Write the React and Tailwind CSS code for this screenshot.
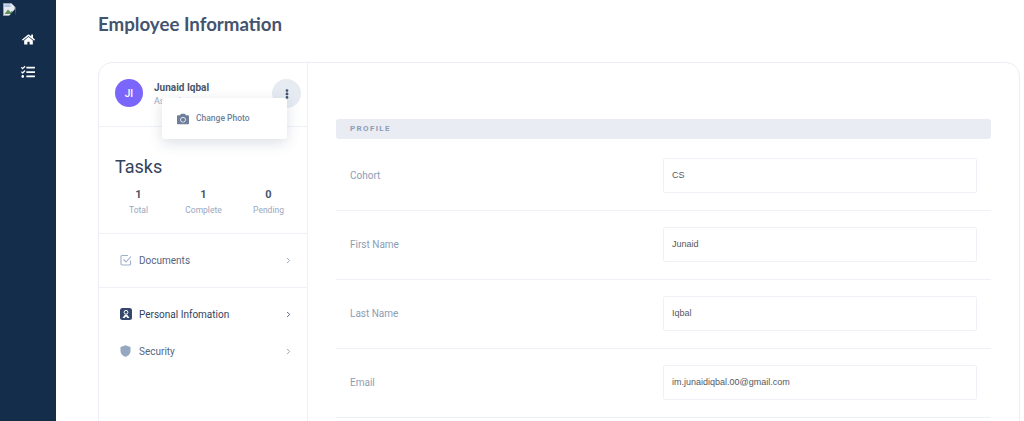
import React from "react";
import { ChevronRight } from "lucide-react";
import { FaHome, FaTasks, FaCamera, FaEllipsisV } from "react-icons/fa";

function Row({ label, value }) {
  return (
    <div className="flex h-[69px] items-start border-b border-[#eff1f6] pt-[16px]">
      <div className="flex h-[35px] w-[327px] items-center pl-[14px] text-[10px] text-[#8c9db5]">{label}</div>
      <div className="flex h-[35px] w-[314px] items-center rounded-[2px] border border-[#eff1f6] px-2 text-[9px] text-[#55585f] font-['Liberation_Sans',sans-serif]">{value}</div>
    </div>
  );
}

function NavItem({ icon, label, active, className }) {
  return (
    <div className={`flex items-center pr-[14px] pl-[21px] text-[10px] ${active ? "text-[#33425c]" : "text-[#55657f]"} ${className}`}>
      <span className="flex w-[19px] items-center">{icon}</span>
      <span className="flex-1">{label}</span>
      <ChevronRight size={9} strokeWidth={2.5} className={active ? "text-[#4b5a75]" : "text-[#8fa0b8]"} />
    </div>
  );
}

function Stat({ n, label }) {
  return (
    <div className="flex w-[65px] flex-col items-center">
      <div className="mt-[1px] text-[11px] leading-[14px] font-bold text-[#4a5568]">{n}</div>
      <div className="mt-[2px] text-[8.5px] leading-[12px] text-[#9aa8bd]">{label}</div>
    </div>
  );
}

export default function App() {
  return (
    <div className="flex h-[421px] w-[1024px] overflow-hidden bg-white font-['Roboto',sans-serif]">
      <aside className="flex w-[56px] shrink-0 flex-col items-center bg-[#132d4b]">
        <svg width="13" height="13" viewBox="0 0 13 13" className="mt-[3px] mr-[38px] shrink-0">
          <path d="M0.500 0.500H8.500L12 4V12.500H0.500Z" fill="#e6e9ee" stroke="#9aa3ad" />
          <path d="M1.500 11L5 6.500L7.500 9L9 8L11.500 11Z" fill="#5f8f5a" />
          <path d="M1.500 1.500H7.500V4H1.500Z" fill="#a9c3ea" />
          <path d="M12 6L6 13H13Z" fill="#132d4b" />
        </svg>
        <FaHome className="mt-[17px] text-[13px] text-white" />
        <FaTasks className="mt-[19px] text-[14px] text-white" />
      </aside>
      <main className="flex-1 pr-[5px] pl-[42px]">
        <h1 className="mt-[12px] h-[24px] font-['Lato',sans-serif] text-[18.700px] leading-[24px] font-bold text-[#44546f]">Employee Information</h1>
        <div className="mt-[26px] flex h-[400px] w-[922px] rounded-[14px] border border-[#eceef5]">
          <div className="relative w-[209px] shrink-0 border-r border-[#eff1f6]">
            <div className="flex h-[64px] items-start border-b border-[#eff1f6] pt-[16px] pl-[16px]">
              <div className="flex h-[28px] w-[28px] items-center justify-center rounded-full bg-[#7b66fb] text-[10px] font-medium text-white">JI</div>
              <div className="ml-[11px] w-[118px] pt-[2px]">
                <div className="text-[10px] leading-[14px] font-bold text-[#4a5568]">Junaid Iqbal</div>
                <div className="text-[9px] leading-[12px] text-[#9aa8bd]">Associate</div>
              </div>
              <div className="flex h-[29px] w-[29px] items-center justify-center rounded-full bg-[#e6ebf2]">
                <FaEllipsisV className="text-[10px] text-[#44546f]" />
              </div>
            </div>
            <div className="absolute top-[35px] left-[63px] flex h-[41px] w-[125px] items-center rounded-[3px] bg-white pl-[15px] shadow-[0_4px_14px_rgba(60,75,110,0.18)]">
              <FaCamera className="text-[12px] text-[#6e7f9b]" />
              <span className="ml-[7px] text-[8.500px] font-medium text-[#6e7f9b]">Change Photo</span>
            </div>
            <div className="h-[107px] border-b border-[#eff1f6] pt-[29px]">
              <div className="pl-[16px] text-[18px] leading-[22px] text-[#33435c]">Tasks</div>
              <div className="mt-[9px] ml-[7px] flex">
                <Stat n="1" label="Total" />
                <Stat n="1" label="Complete" />
                <Stat n="0" label="Pending" />
              </div>
            </div>
            <div className="h-[54px] border-b border-[#eff1f6] pt-[19px]">
              <NavItem
                className="h-[14px]"
                label="Documents"
                icon={
                  <svg width="12" height="12" viewBox="0 0 12 12" fill="none" stroke="#9fb0c8" strokeWidth="1.1">
                    <path d="M10.500 6.500V10a1 1 0 0 1-1 1H2a1 1 0 0 1-1-1V2.500a1 1 0 0 1 1-1h6" />
                    <path d="M3.500 5.500L6 8L11 2.500" />
                  </svg>
                }
              />
            </div>
            <div className="pt-[19px]">
              <NavItem
                active
                className="h-[14px]"
                label="Personal Infomation"
                icon={
                  <svg width="12" height="12" viewBox="0 0 12 12">
                    <rect width="12" height="12" rx="2.500" fill="#33486a" />
                    <circle cx="6" cy="4.300" r="1.900" fill="none" stroke="#fff" strokeWidth="1" />
                    <path d="M2.500 10L4.800 6.800H7.200L9.500 10H7.500L6 8.500L4.500 10Z" fill="#fff" />
                  </svg>
                }
              />
              <NavItem
                className="mt-[23px] h-[14px]"
                label="Security"
                icon={
                  <svg width="11" height="12" viewBox="0 0 11 12">
                    <path d="M5.500 0.300L10.500 2V6C10.500 9 8 11 5.500 11.800C3 11 0.500 9 0.500 6V2Z" fill="#95a8c2" />
                  </svg>
                }
              />
            </div>
          </div>
          <div className="flex-1 pt-[56px] pl-[28px]">
            <div className="w-[655px]">
              <div className="flex h-[20px] items-center rounded-[3px] bg-[#e9ecf2] pl-[14px] text-[8px] font-bold tracking-[0.17em] text-[#8c9db5]">PROFILE</div>
              <div className="pt-[3px]">
                <Row label="Cohort" value="CS" />
                <Row label="First Name" value="Junaid" />
                <Row label="Last Name" value="Iqbal" />
                <Row label="Email" value="im.junaidiqbal.00@gmail.com" />
              </div>
            </div>
          </div>
        </div>
      </main>
    </div>
  );
}
